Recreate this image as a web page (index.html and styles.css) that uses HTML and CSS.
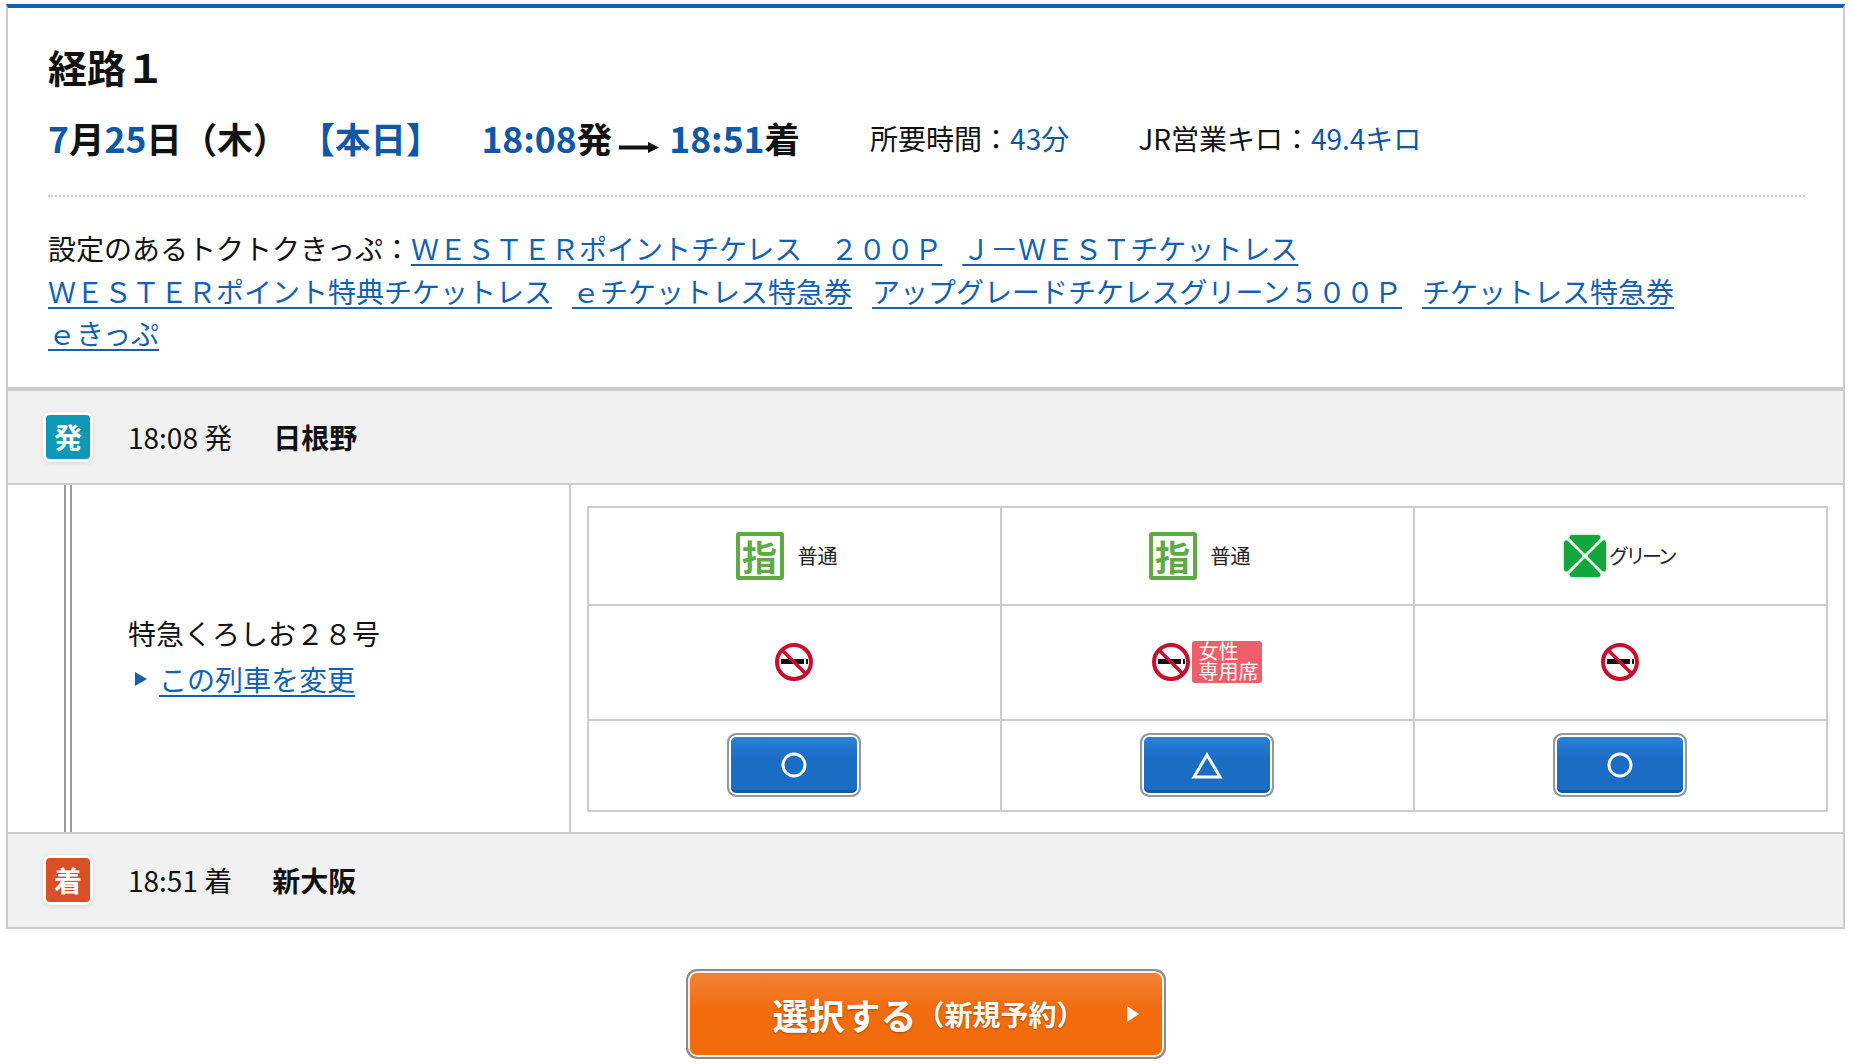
FILE: index.html
```html
<!DOCTYPE html>
<html lang="ja">
<head>
    <meta charset="UTF-8">
    <title>経路1</title>
    <link rel="stylesheet" href="styles.css">
</head>
<body>
    <svg class="defs" width="0" height="0">
        <symbol id="nosmoke" viewBox="0 0 38 38">
            <circle cx="19" cy="19" r="17" fill="#fff" stroke="#c8102e" stroke-width="4"/>
            <rect x="6" y="16" width="23" height="5" fill="#111"/>
            <rect x="31" y="16" width="2" height="5" fill="#111"/>
            <line x1="7" y1="7" x2="31" y2="31" stroke="#c8102e" stroke-width="3.5"/>
        </symbol>
    </svg>

    <div class="route">
        <section class="summary">
            <h1>経路１</h1>
            <div class="dateline">
                <span class="blue">7</span><span>月</span><span class="blue">25</span><span>日（木）</span>
                <span class="blue today">【本日】</span>
                <span class="blue dep-time">18:08</span><span>発</span>
                <svg class="arrow" width="40" height="11" viewBox="0 0 40 11"><rect x="0" y="3.5" width="30" height="4" fill="#111"/><polygon points="29,0 40,5.5 29,11" fill="#111"/></svg>
                <span class="blue">18:51</span><span>着</span>
                <span class="meta first">所要時間：<span class="blue">43分</span></span>
                <span class="meta second">JR営業キロ：<span class="blue">49.4キロ</span></span>
            </div>
            <p class="tickets">
                設定のあるトクトクきっぷ：<a href="#">ＷＥＳＴＥＲポイントチケレス　２００Ｐ</a><a href="#">Ｊ－ＷＥＳＴチケットレス</a><br>
                <a href="#">ＷＥＳＴＥＲポイント特典チケットレス</a><a href="#">ｅチケットレス特急券</a><a href="#">アップグレードチケレスグリーン５００Ｐ</a><a href="#">チケットレス特急券</a><br>
                <a href="#">ｅきっぷ</a>
            </p>
        </section>

        <div class="stop">
            <span class="badge dep">発</span>
            <span class="time">18:08 発</span>
            <strong class="station">日根野</strong>
        </div>

        <div class="leg">
            <div class="track"></div>
            <div class="train">
                <div class="train-name">特急くろしお２８号</div>
                <div class="train-change"><i class="tri"></i><a href="#">この列車を変更</a></div>
            </div>
            <div class="seats">
                <div class="seat-grid">
                    <div class="cell kind"><span class="reserved">指</span><span class="kind-label">普通</span></div>
                    <div class="cell kind"><span class="reserved">指</span><span class="kind-label">普通</span></div>
                    <div class="cell kind green-kind">
                        <svg width="46" height="46" viewBox="0 0 46 46">
                            <g stroke="#d6f0da" stroke-width="7" stroke-linejoin="round" fill="#d6f0da">
                                <polygon points="10,4 36,4 23,18"/><polygon points="10,42 36,42 23,28"/><polygon points="4,10 4,36 18,23"/><polygon points="42,10 42,36 28,23"/>
                            </g>
                            <g stroke="#12a63e" stroke-width="5" stroke-linejoin="round" fill="#12a63e">
                                <polygon points="10,4.5 36,4.5 23,18"/><polygon points="10,41.5 36,41.5 23,28"/><polygon points="4.5,10 4.5,36 18,23"/><polygon points="41.5,10 41.5,36 28,23"/>
                            </g>
                            <path d="M5 5L41 41M41 5L5 41" stroke="#eef9f0" stroke-width="2.5"/>
                        </svg>
                        <span class="green-label">グリーン</span>
                    </div>

                    <div class="cell"><svg class="nosmoke"><use href="#nosmoke"/></svg></div>
                    <div class="cell"><svg class="nosmoke"><use href="#nosmoke"/></svg><span class="ladies">女性<br>専用席</span></div>
                    <div class="cell"><svg class="nosmoke"><use href="#nosmoke"/></svg></div>

                    <div class="cell">
                        <button class="seat-btn"><svg width="30" height="30" viewBox="0 0 30 30"><circle cx="15" cy="15" r="11" fill="none" stroke="#fff" stroke-width="3"/></svg></button>
                    </div>
                    <div class="cell">
                        <button class="seat-btn"><svg width="34" height="30" viewBox="0 0 34 30"><polygon points="17,5 30,27 4,27" fill="none" stroke="#fff" stroke-width="3"/></svg></button>
                    </div>
                    <div class="cell">
                        <button class="seat-btn"><svg width="30" height="30" viewBox="0 0 30 30"><circle cx="15" cy="15" r="11" fill="none" stroke="#fff" stroke-width="3"/></svg></button>
                    </div>
                </div>
            </div>
        </div>

        <div class="stop last">
            <span class="badge arr">着</span>
            <span class="time">18:51 着</span>
            <strong class="station arr-station">新大阪</strong>
        </div>
    </div>

    <div class="actions">
        <button class="select-btn">
            <span class="select-main">選択する</span><span class="select-sub">（新規予約）</span><i class="select-tri"></i>
        </button>
    </div>
</body>
</html>
```

FILE: styles.css
```css
body { margin: 0; background: #fff; color: #111; font-family: "Noto Sans CJK JP", "Noto Sans", sans-serif; font-size: 28px; }
a { color: #1262b3; }
.defs { display: block; height: 0; }
.blue { color: #0f58a6; }

.route { margin: 4px 7px 0 6px; border: 2px solid #ccc; border-top: 4px solid #1262b3; }

.summary { padding: 33px 38px 32px 40px; border-bottom: 4px solid #ccc; }
.summary h1 { margin: 0; font-size: 39px; line-height: 50px; font-weight: 700; }
.dateline { display: flex; align-items: baseline; margin-top: 22px; padding-bottom: 32px; border-bottom: 2px dotted #ccc; font-size: 35.5px; line-height: 50px; font-weight: 700; }
.today { margin-left: 11px; }
.dep-time { margin-left: 40px; }
.arrow { margin: 0 10px 0 7px; }
.meta { align-self: flex-start; font-size: 28px; font-weight: 400; }
.meta.first { margin-left: 70px; }
.meta.second { margin-left: 69px; }
.tickets { margin: 30px 0 0; line-height: 42.5px; }
.tickets a { margin-right: 20px; text-decoration-thickness: 2px; text-underline-offset: 4px; }

.stop { display: flex; align-items: center; height: 92px; padding-left: 38px; background: #f1f1f1; border-bottom: 2px solid #ccc; }
.stop.last { height: 93px; border-bottom: 0; }
.badge { display: flex; align-items: center; justify-content: center; width: 44px; height: 44px; border-radius: 4px; color: #fff; font-size: 28px; font-weight: 700; box-shadow: 0 0 0 3px #fff, 0 1px 4px 3px rgba(0,0,0,0.12); }
.badge.dep { background: #0f97b8; }
.badge.arr { background: #d94f26; }
.time { margin-left: 38px; }
.station { margin-left: 41px; font-weight: 700; }
.arr-station { margin-left: 40px; }

.leg { display: flex; height: 347px; border-bottom: 2px solid #ccc; }
.track { width: 4px; margin-left: 56px; border-left: 2px solid #999; border-right: 2px solid #999; }
.train { display: flex; flex-direction: column; justify-content: center; box-sizing: border-box; flex: 0 0 499px; padding: 0 0 4px 56px; border-right: 2px solid #ccc; }
.train-name { line-height: 46px; }
.train-change { display: flex; align-items: center; line-height: 46px; }
.train-change a { text-decoration-thickness: 2px; text-underline-offset: 4px; }
.tri { width: 0; height: 0; margin: 0 12px 0 7px; border-left: 12px solid #1262b3; border-top: 7px solid transparent; border-bottom: 7px solid transparent; }

.seats { flex: 1; padding: 21px 15px 20px 16px; }
.seat-grid { display: grid; grid-template-columns: repeat(3, 1fr); grid-template-rows: 98px 115px 91px; border-top: 2px solid #ccc; border-left: 2px solid #ccc; }
.cell { display: flex; align-items: center; justify-content: center; padding-right: 2px; border-right: 2px solid #ccc; border-bottom: 2px solid #ccc; }

.kind { padding-right: 16px; }
.green-kind { padding-right: 5px; }
.reserved { display: flex; align-items: center; justify-content: center; box-sizing: border-box; width: 48px; height: 48px; border: 4px solid #5faa45; border-radius: 3px; color: #5faa45; font-size: 35px; font-weight: 700; line-height: 1; }
.kind-label { margin-left: 14px; font-size: 20px; color: #222; }
.green-label { margin-left: 1px; font-size: 20px; letter-spacing: -3.5px; color: #222; }

.nosmoke { width: 38px; height: 38px; }
.ladies { box-sizing: border-box; width: 70px; height: 42px; margin-left: 2px; padding-left: 7px; background: #ee5f6b; border-radius: 3px; color: #fff; font-size: 20px; line-height: 20px; white-space: nowrap; }

.seat-btn { display: flex; align-items: center; justify-content: center; box-sizing: border-box; width: 134px; height: 64px; padding: 0; border: 2px solid #8f9aa3; border-radius: 9px; background: linear-gradient(#2e82da, #1b6dc4 40%); box-shadow: inset 0 0 0 2px #fff, inset 0 -5px 0 0 #155a9f; }

.actions { display: flex; justify-content: center; margin-top: 40px; margin-left: -1px; }
.select-btn { display: flex; align-items: center; box-sizing: border-box; width: 480px; height: 90px; padding: 0 0 0 85px; border: 2px solid #8c8c8c; border-radius: 11px; background: linear-gradient(#f28338, #f26c0e 45%); box-shadow: inset 0 0 0 2px #fdf0e4; color: #fff; font-family: inherit; font-weight: 700; text-shadow: 0 1px 2px rgba(120,50,0,0.6); }
.select-main { font-size: 36px; }
.select-sub { font-size: 28px; }
.select-tri { width: 0; height: 0; margin-left: 42px; border-left: 12px solid #fff; border-top: 8px solid transparent; border-bottom: 8px solid transparent; }
```
